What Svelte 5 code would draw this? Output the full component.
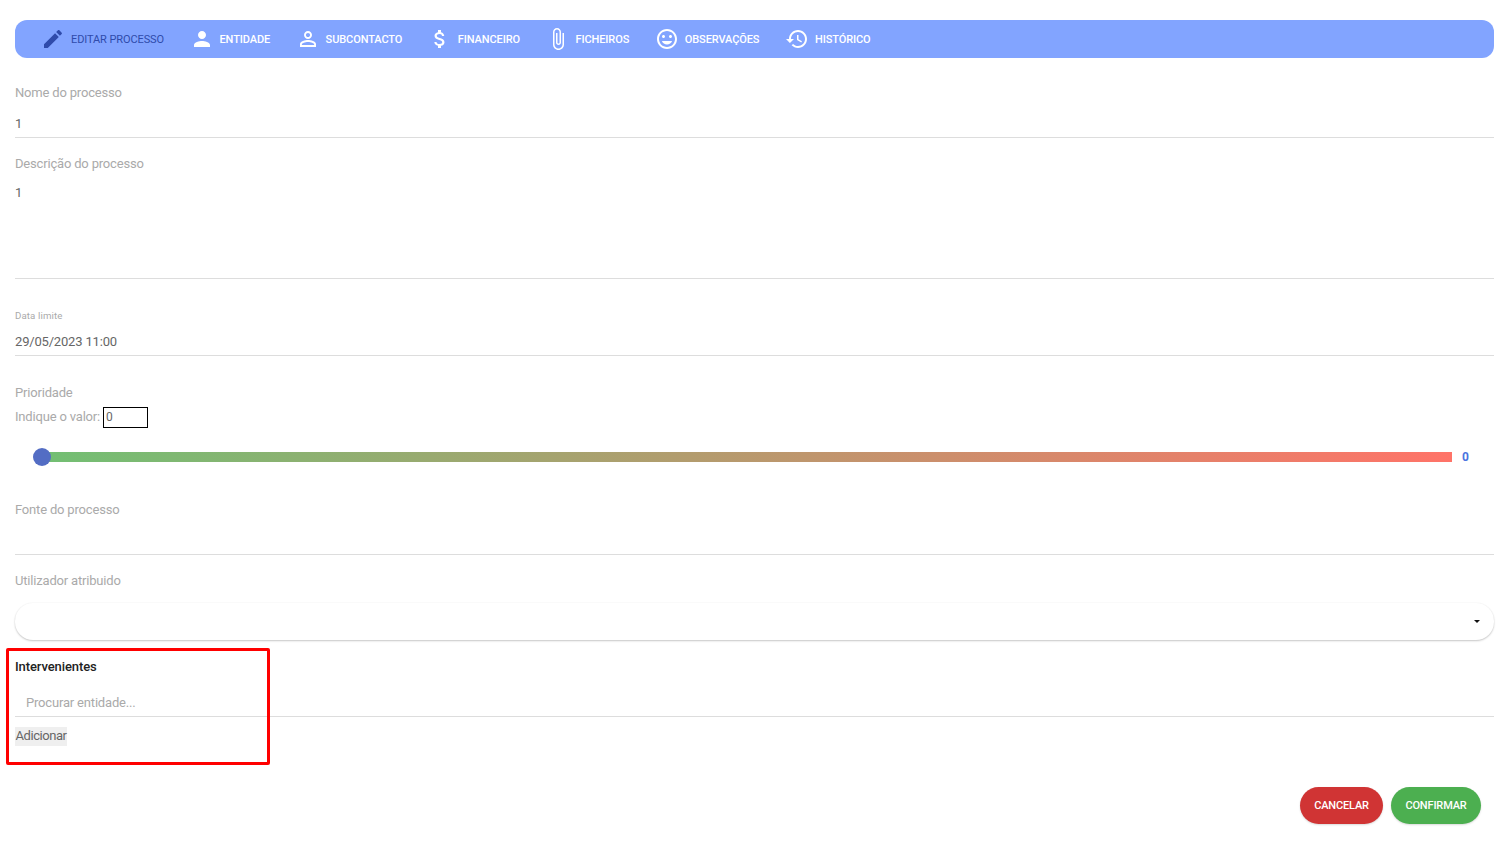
<script lang="ts">
	const tabs = [
		{ label: 'Editar processo', active: true, d: 'M3 17.25V21h3.75L17.81 9.94l-3.75-3.75L3 17.25zM20.71 7.04c.39-.39.39-1.02 0-1.41l-2.34-2.34c-.39-.39-1.02-.39-1.41 0l-1.83 1.83 3.75 3.75 1.83-1.83z' },
		{ label: 'Entidade', d: 'M12 12c2.21 0 4-1.79 4-4s-1.79-4-4-4-4 1.79-4 4 1.79 4 4 4zm0 2c-2.67 0-8 1.34-8 4v2h16v-2c0-2.66-5.33-4-8-4z' },
		{ label: 'Subcontacto', d: 'M12 5.9c1.16 0 2.1.94 2.1 2.1s-.94 2.1-2.1 2.1S9.9 9.16 9.9 8s.94-2.1 2.1-2.1m0 9c2.97 0 6.1 1.46 6.1 2.1v1.1H5.9V17c0-.64 3.13-2.1 6.1-2.1M12 4C9.79 4 8 5.79 8 8s1.79 4 4 4 4-1.79 4-4-1.79-4-4-4zm0 9c-2.67 0-8 1.34-8 4v3h16v-3c0-2.66-5.33-4-8-4z' },
		{ label: 'Financeiro', d: 'M11.8 10.9c-2.27-.59-3-1.2-3-2.15 0-1.09 1.01-1.85 2.7-1.85 1.78 0 2.44.85 2.5 2.1h2.21c-.07-1.72-1.12-3.3-3.21-3.81V3h-3v2.16c-1.94.42-3.5 1.68-3.5 3.61 0 2.31 1.91 3.46 4.7 4.13 2.5.6 3 1.48 3 2.41 0 .69-.49 1.79-2.7 1.79-2.06 0-2.87-.92-2.98-2.1h-2.2c.12 2.19 1.76 3.42 3.68 3.83V21h3v-2.15c1.95-.37 3.5-1.5 3.5-3.55 0-2.84-2.43-3.81-4.7-4.4z' },
		{ label: 'Ficheiros', d: 'M16.5 6v11.5c0 2.21-1.79 4-4 4s-4-1.79-4-4V5c0-1.38 1.12-2.5 2.5-2.5s2.5 1.12 2.5 2.5v10.5c0 .55-.45 1-1 1s-1-.45-1-1V6H10v9.5c0 1.38 1.12 2.5 2.5 2.5s2.5-1.12 2.5-2.5V5c0-2.21-1.79-4-4-4S7 2.79 7 5v12.5c0 3.04 2.46 5.5 5.5 5.5s5.5-2.46 5.5-5.5V6h-1.5z' },
		{ label: 'Observações', d: 'M11.99 2C6.47 2 2 6.48 2 12s4.47 10 9.99 10C17.52 22 22 17.52 22 12S17.52 2 11.99 2zM12 20c-4.42 0-8-3.58-8-8s3.58-8 8-8 8 3.58 8 8-3.58 8-8 8zm3.5-9c.83 0 1.5-.67 1.5-1.5S16.33 8 15.5 8 14 8.67 14 9.5s.67 1.5 1.5 1.5zm-7 0c.83 0 1.5-.67 1.5-1.5S9.33 8 8.5 8 7 8.67 7 9.5 7.67 11 8.5 11zm3.5 6.5c2.33 0 4.31-1.46 5.11-3.5H6.89c.8 2.04 2.78 3.5 5.11 3.5z' },
		{ label: 'Histórico', d: 'M13 3c-4.97 0-9 4.03-9 9H1l3.89 3.89.07.14L9 12H6c0-3.87 3.13-7 7-7s7 3.13 7 7-3.13 7-7 7c-1.93 0-3.68-.79-4.94-2.06l-1.42 1.42C8.27 19.99 10.51 21 13 21c4.97 0 9-4.03 9-9s-4.03-9-9-9zm-1 5v5l4.28 2.54.72-1.21-3.5-2.08V8h-1.5z' }
	];
</script>

<div class="page">
	<nav class="tabs">
		{#each tabs as tab}
			<div class="tab" class:active={tab.active}>
				<svg viewBox="0 0 24 24" width="24" height="24"><path d={tab.d} /></svg>
				<span>{tab.label}</span>
			</div>
		{/each}
	</nav>

	<section class="field name">
		<div class="label">Nome do processo</div>
		<div class="value">1</div>
	</section>

	<section class="field desc">
		<div class="label">Descrição do processo</div>
		<div class="value">1</div>
	</section>

	<section class="field date">
		<div class="label small">Data limite</div>
		<div class="value">29/05/2023 11:00</div>
	</section>

	<section class="priority">
		<div class="label">Prioridade</div>
		<div class="indicate">
			<span class="label">Indique o valor:</span>
			<input class="num" value="0" />
		</div>
		<div class="slider">
			<div class="track"><div class="thumb"></div></div>
			<b>0</b>
		</div>
	</section>

	<section class="field source">
		<div class="label">Fonte do processo</div>
		<div class="value"></div>
	</section>

	<section class="assigned">
		<div class="label">Utilizador atribuido</div>
		<div class="select"><i></i></div>
	</section>

	<section class="people">
		<h4>Intervenientes</h4>
		<div class="search">Procurar entidade...</div>
		<button class="add">Adicionar</button>
		<div class="highlight"></div>
	</section>

	<div class="actions">
		<button class="cancel">Cancelar</button>
		<button class="confirm">Confirmar</button>
	</div>
</div>

<style>
	:global(body) {
		background: #fff;
	}

	.page {
		font-family: Roboto, 'Liberation Sans', sans-serif;
		font-size: 13px;
		letter-spacing: -0.18px;
		color: #666;
		padding: 20px 13px 0 15px;
		height: 827px;
		overflow: hidden;
	}

	.tabs {
		display: flex;
		align-items: center;
		height: 38px;
		padding-left: 26px;
		gap: 25.5px;
		background: #82a4ff;
		border-radius: 12px;
	}

	.tab {
		display: flex;
		align-items: center;
		gap: 6px;
		color: #fff;
		fill: #fff;
		font-size: 11px;
		font-weight: 500;
		letter-spacing: -0.1px;
		text-transform: uppercase;
		&.active {
			color: #2f4bab;
			fill: #2f4bab;
			font-weight: 400;
		}
	}

	.tab + .tab svg {
		margin: 0 -0.5px 0 0.5px;
	}

	.label {
		color: #aaa;
		font-size: 13px;
		line-height: 16px;
	}

	.small {
		font-size: 9.7px;
		line-height: 18px;
		letter-spacing: 0.1px;
		color: #aaa;
	}

	.value {
		line-height: 16px;
		color: #666;
	}

	.field {
		border-bottom: 1px solid #ddd;
	}

	.name {
		margin-top: 27px;
		height: 52px;
		.value { margin-top: 15px; }
	}

	.desc {
		margin-top: 18px;
		height: 122px;
		.value { margin-top: 13px; }
	}

	.date {
		margin-top: 28px;
		height: 48px;
		.value { margin-top: 9px; }
	}

	.priority {
		margin-top: 29px;
	}

	.indicate {
		display: flex;
		align-items: flex-start;
		gap: 3px;
		margin-top: 6px;
		.label { margin-top: 2px; }
	}

	.num {
		width: 45px;
		height: 21px;
		box-sizing: border-box;
		border: 1px solid #000;
		padding: 0 2px 2px;
		font: inherit;
		font-size: 12px;
		color: #666;
		outline: none;
	}

	.slider {
		display: flex;
		align-items: center;
		margin-top: 22px;
		padding-left: 27px;
		b {
			margin-left: 10px;
			font-size: 12px;
			color: #4b74e0;
		}
	}

	.track {
		position: relative;
		width: 1410px;
		height: 10px;
		background: linear-gradient(to right, #72bf73, #ff7368);
	}

	.thumb {
		position: absolute;
		left: -9px;
		top: -4px;
		width: 18px;
		height: 18px;
		border-radius: 50%;
		background: #536dc4;
	}

	.source {
		margin-top: 38px;
		height: 52px;
	}

	.assigned {
		margin-top: 18px;
	}

	.select {
		position: relative;
		height: 37px;
		margin-top: 14px;
		border-radius: 18px;
		background: #fff;
		box-shadow: 0 1px 2px rgba(0, 0, 0, 0.22), 0 0 2px rgba(0, 0, 0, 0.04);
		i {
			position: absolute;
			right: 14px;
			top: 17px;
			border: 3.5px solid transparent;
			border-top-color: #111;
			border-bottom: 0;
		}
	}

	.people {
		position: relative;
		margin-top: 19px;
		h4 {
			margin: 0;
			font-size: 13px;
			line-height: 16px;
			font-weight: 500;
			letter-spacing: -0.1px;
			color: #222;
		}
	}

	.search {
		margin-top: 20px;
		padding: 0 0 5px 11px;
		line-height: 16px;
		color: #aaa;
		border-bottom: 1px solid #ddd;
	}

	.add {
		display: block;
		margin-top: 10px;
		padding: 0 0 3px;
		width: 52px;
		height: 19px;
		border: 0;
		background: #efefef;
		font: inherit;
		letter-spacing: -0.45px;
		color: #666;
		white-space: nowrap;
	}

	.highlight {
		position: absolute;
		left: -9px;
		top: -11px;
		width: 258px;
		height: 111px;
		border: 3px solid #f00;
		border-radius: 2px;
		pointer-events: none;
	}

	.actions {
		display: flex;
		justify-content: flex-end;
		gap: 8px;
		margin-top: 41px;
		padding-right: 13px;
		button {
			height: 37px;
			width: 90px;
			border: 0;
			border-radius: 19px;
			padding: 0;
			font: inherit;
			font-size: 11px;
			font-weight: 500;
			letter-spacing: -0.15px;
			text-transform: uppercase;
			color: #fff;
			box-shadow: 0 1px 2px rgba(0, 0, 0, 0.15);
		}
	}

	.actions .cancel {
		width: 83px;
		background: #d03434;
	}

	.confirm {
		background: #4caf50;
	}
</style>
